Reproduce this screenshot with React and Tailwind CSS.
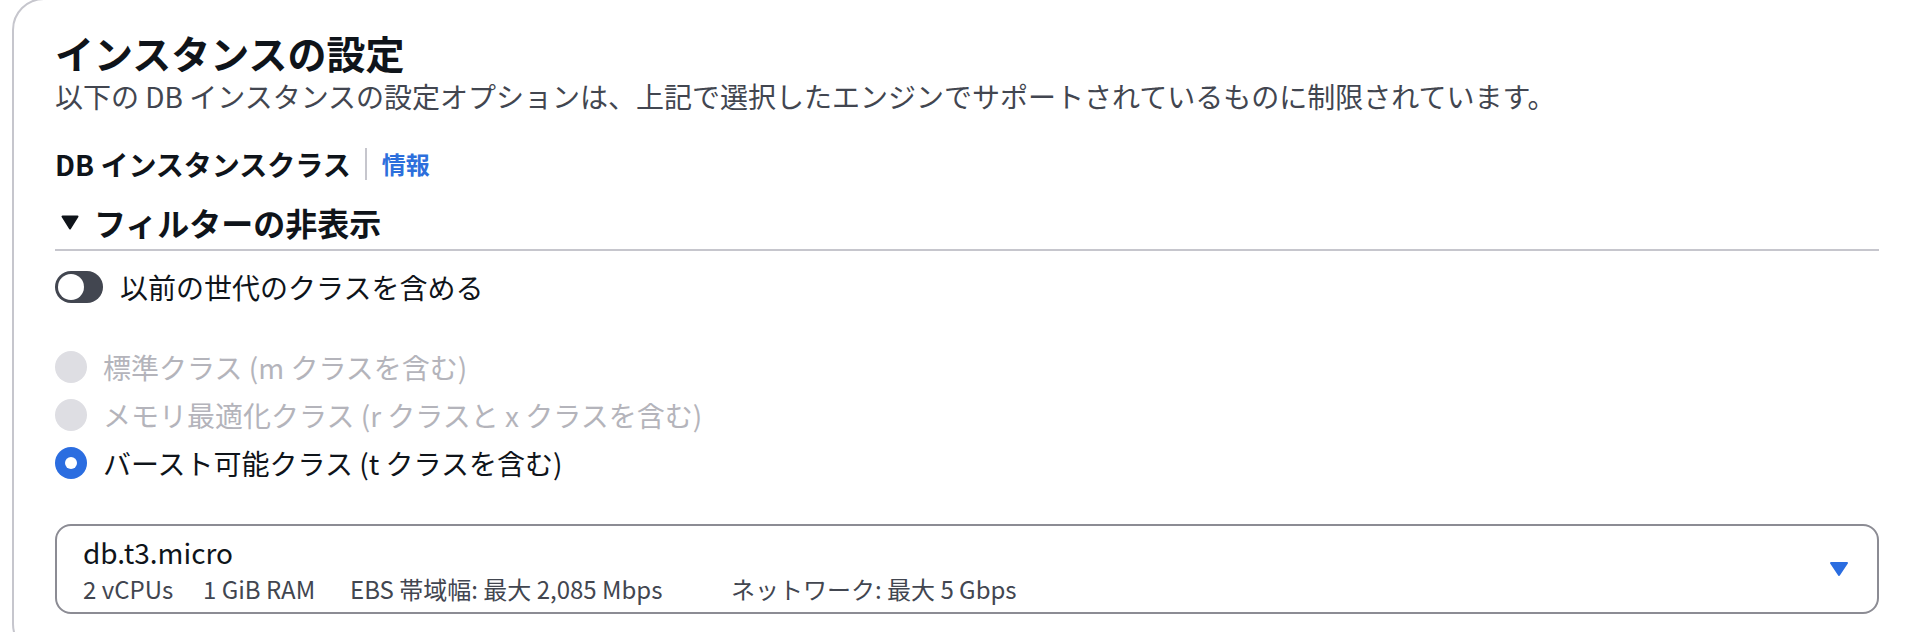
import React from "react";

function Caret({ className }) {
  return (
    <svg className={className} viewBox="0 0 20 16" width="20" height="16" aria-hidden="true">
      <path d="M2 2 H18 L10 14 Z" fill="currentColor" stroke="currentColor" strokeWidth="2" strokeLinejoin="round" />
    </svg>
  );
}

function Radio({ state, children }) {
  const text =
    state === "disabled" ? "text-[#b4b4bb]" : "text-[#0f141a]";
  return (
    <div className="flex h-[40px] items-center">
      {state === "checked" ? (
        <span className="flex h-[32px] w-[32px] items-center justify-center rounded-full bg-[#2b6de0]">
          <span className="h-[12px] w-[12px] rounded-full bg-white" />
        </span>
      ) : (
        <span className="h-[32px] w-[32px] rounded-full bg-[#dedee3]" />
      )}
      <span className={`ml-[16px] text-[28px] leading-[40px] ${text}`}>{children}</span>
    </div>
  );
}

export default function App() {
  return (
    <div className="h-[632px] w-[1924px] overflow-hidden bg-white font-['Noto_Sans_CJK_JP','Noto_Sans',sans-serif]">
      <div className="ml-[12px] mt-[-2px] w-[1990px] rounded-[32px] border-2 border-[#c6c6cd] bg-white pb-[40px] pl-[41px] pt-[28px]">
        <div className="w-[1824px]">
          <h2 className="text-[39px] font-bold leading-[48px] text-[#0f141a]">インスタンスの設定</h2>
          <p className="text-[28px] leading-[40px] text-[#424650]">
            以下の DB インスタンスの設定オプションは、上記で選択したエンジンでサポートされているものに制限されています。
          </p>

          <div className="mt-[28px] flex h-[40px] items-center">
            <span className="text-[28px] font-bold leading-[40px] text-[#0f141a]">DB インスタンスクラス</span>
            <span className="ml-[14px] h-[32px] w-[2px] bg-[#c6c6cd]" />
            <span className="ml-[15px] text-[24px] font-bold leading-[40px] text-[#2d6fdc]">情報</span>
          </div>

          <div className="mt-[18px] flex h-[40px] items-center">
            <svg viewBox="0 0 18 15" width="18" height="15" className="ml-[6px] text-[#0f141a]" aria-hidden="true">
              <path d="M1.5 1.5 H16.5 L9 13.5 Z" fill="currentColor" stroke="currentColor" strokeWidth="2" strokeLinejoin="round" />
            </svg>
            <span className="ml-[15px] text-[32px] font-bold leading-[40px] text-[#0f141a]">フィルターの非表示</span>
          </div>

          <div className="mt-[7px] h-[2px] w-full bg-[#c6c6cd]" />

          <div className="mt-[16px] flex h-[40px] items-center">
            <span className="flex h-[32px] w-[48px] items-center rounded-full bg-[#424650]">
              <span className="ml-[3px] h-[26px] w-[26px] rounded-full bg-white" />
            </span>
            <span className="ml-[17px] text-[28px] leading-[40px] text-[#0f141a]">以前の世代のクラスを含める</span>
          </div>

          <div className="mt-[40px] flex flex-col gap-[8px]">
            <Radio state="disabled">標準クラス (m クラスを含む)</Radio>
            <Radio state="disabled">メモリ最適化クラス (r クラスと x クラスを含む)</Radio>
            <Radio state="checked">バースト可能クラス (t クラスを含む)</Radio>
          </div>

          <div className="mt-[41px] flex h-[90px] items-center rounded-[16px] border-2 border-[#8c8c94] pl-[26px] pr-[28px]">
            <div className="flex flex-1 flex-col pb-[6px] pt-[9px]">
              <div className="text-[28px] leading-[32px] text-[#0f141a]">db.t3.micro</div>
              <div className="mt-[5px] flex text-[24px] leading-[32px] text-[#424650]">
                <span className="w-[120px] shrink-0">2 vCPUs</span>
                <span className="w-[147px] shrink-0">1 GiB RAM</span>
                <span className="w-[381px] shrink-0">EBS 帯域幅: 最大 2,085 Mbps</span>
                <span className="shrink-0">ネットワーク: 最大 5 Gbps</span>
              </div>
            </div>
            <Caret className="text-[#2b6de0]" />
          </div>
        </div>
      </div>
    </div>
  );
}
